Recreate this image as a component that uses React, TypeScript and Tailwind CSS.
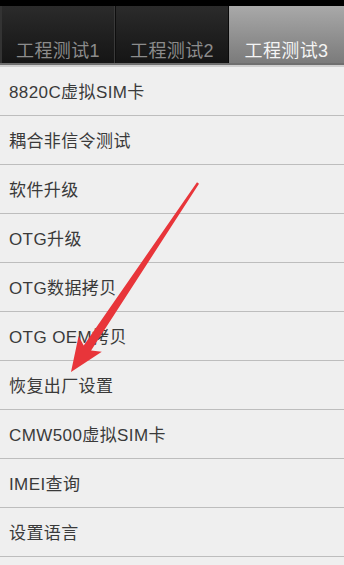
import React from "react";

const items = [
  "8820C虚拟SIM卡",
  "耦合非信令测试",
  "软件升级",
  "OTG升级",
  "OTG数据拷贝",
  "OTG OEM拷贝",
  "恢复出厂设置",
  "CMW500虚拟SIM卡",
  "IMEI查询",
  "设置语言",
];

const font = { fontFamily: '"Liberation Sans", "Noto Sans CJK SC", sans-serif' };

export default function App() {
  return (
    <div className="relative w-[344px] h-[565px] overflow-hidden bg-[#efefef]" style={font}>
      <div className="h-[6px] bg-black" />
      <div className="flex h-[57px] bg-gradient-to-b from-[#2b2b2b] to-[#151515]">
        <div className="flex w-[115px] items-end justify-center border-l-[2px] border-l-[#333] border-r border-r-[#3a3a3a] pb-[1px]">
          <span className="text-[18px] leading-[22px] tracking-[0.4px] text-[#8c8c8c]">工程测试1</span>
        </div>
        <div className="flex w-[114px] items-end justify-center border-l border-l-[#0e0e0e] border-r border-r-[#0a0a0a] pb-[1px]">
          <span className="text-[18px] leading-[22px] tracking-[0.4px] text-[#8c8c8c]">工程测试2</span>
        </div>
        <div className="flex flex-1 items-end justify-center bg-gradient-to-b from-[#a9a9a9] to-[#7b7b7b] pb-[1px]">
          <span className="text-[18px] leading-[22px] tracking-[0.4px] text-[#f4f4f4]">工程测试3</span>
        </div>
      </div>
      <div className="h-[2px] bg-[#6f6f6f]" />
      <div className="h-[2px] bg-[#cfcfcf]" />
      <div className="flex flex-col">
        {items.map((t) => (
          <div
            key={t}
            className="flex h-[49px] items-center border-b border-b-[#bdbdbd] pl-[9px] pt-[3px] text-[17px] tracking-[0.4px] text-[#3a3a3a]"
          >
            {t}
          </div>
        ))}
      </div>
      <svg
        className="pointer-events-none absolute left-0 top-0"
        width="344"
        height="565"
        viewBox="0 0 344 565"
      >
        <polygon
          points="199,183.7 91.1,350.5 101.8,351.8 71,372 78.6,336 83.7,345.5 197,182.3"
          fill="#e8353a"
        />
      </svg>
    </div>
  );
}
